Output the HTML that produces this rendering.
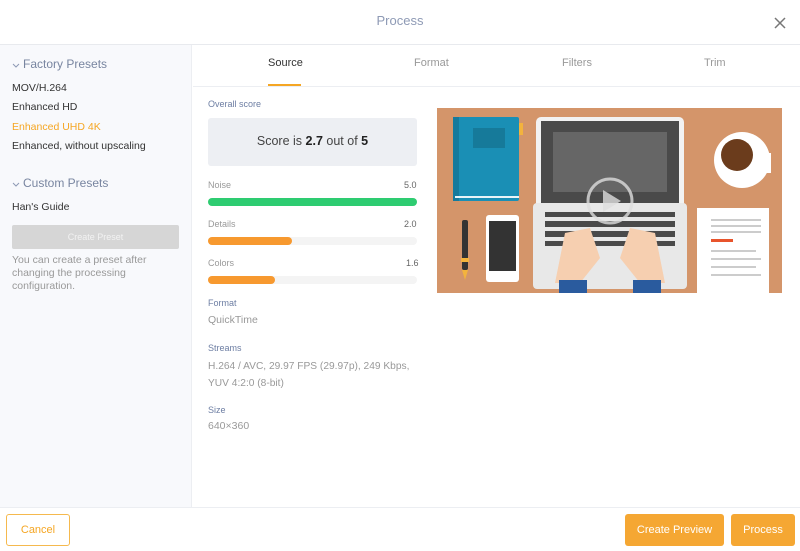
<!DOCTYPE html>
<html><head><meta charset="utf-8"><style>
*{margin:0;padding:0;box-sizing:border-box}
body{width:800px;height:551px;background:#fff;font-family:"Liberation Sans",sans-serif;position:relative;overflow:hidden;color:#333}
.a{position:absolute;white-space:nowrap}
</style></head><body>
<div class="a" style="left:0;top:13px;width:800px;text-align:center;font-size:13px;color:#8e9ab5">Process</div>
<svg class="a" style="left:774px;top:17px" width="12" height="12"><path d="M1 1L11 11M11 1L1 11" stroke="#777" stroke-width="1.5"/></svg>
<div class="a" style="left:0;top:44px;width:800px;height:1px;background:#e8eaee"></div>
<div class="a" style="left:0;top:45px;width:192px;height:462px;background:#f8f9fc;border-right:1px solid #eceef2"></div>
<svg class="a" style="left:12px;top:63px" width="8" height="6"><path d="M1 1L4 4L7 1" stroke="#8e9ab5" fill="none"/></svg>
<div class="a" style="left:23px;top:57px;font-size:12px;color:#7885a0">Factory Presets</div>
<div class="a" style="left:12px;top:82px;font-size:10.5px">MOV/H.264</div>
<div class="a" style="left:12px;top:101px;font-size:10.5px">Enhanced HD</div>
<div class="a" style="left:12px;top:121px;font-size:10.5px;color:#f5a623">Enhanced UHD 4K</div>
<div class="a" style="left:12px;top:140px;font-size:10.5px">Enhanced, without upscaling</div>
<svg class="a" style="left:12px;top:182px" width="8" height="6"><path d="M1 1L4 4L7 1" stroke="#8e9ab5" fill="none"/></svg>
<div class="a" style="left:23px;top:176px;font-size:12px;color:#7885a0">Custom Presets</div>
<div class="a" style="left:12px;top:201px;font-size:10.5px">Han's Guide</div>
<div class="a" style="left:12px;top:225px;width:167px;height:24px;background:#d6d6d6;border-radius:2px;color:#f2f2f2;font-size:9px;text-align:center;line-height:24px">Create Preset</div>
<div class="a" style="left:12px;top:254px;font-size:10.5px;color:#999;line-height:13px;white-space:normal;width:170px">You can create a preset after changing the processing configuration.</div>
<div class="a" style="left:193px;top:86px;width:607px;height:1px;background:#eceef2"></div>
<div class="a" style="left:268px;top:57px;font-size:11px;color:#333">Source</div>
<div class="a" style="left:268px;top:84px;width:33px;height:2px;background:#f5a623"></div>
<div class="a" style="left:414px;top:57px;font-size:11px;color:#999">Format</div>
<div class="a" style="left:562px;top:57px;font-size:11px;color:#999">Filters</div>
<div class="a" style="left:704px;top:57px;font-size:11px;color:#999">Trim</div>
<div class="a" style="left:208px;top:99px;font-size:9px;color:#6d7ea3">Overall score</div>
<div class="a" style="left:208px;top:118px;width:209px;height:48px;background:#edeff3;border-radius:3px;text-align:center;line-height:47px;font-size:12.5px;color:#444">Score is <b style="color:#222">2.7</b> out of <b style="color:#222">5</b></div>
<div class="a" style="left:208px;top:180px;font-size:9px;color:#999">Noise</div><div class="a" style="left:404px;top:180px;font-size:9px;color:#666">5.0</div>
<div class="a" style="left:208px;top:198px;width:209px;height:8px;border-radius:4px;background:#2ecc71"></div>
<div class="a" style="left:208px;top:219px;font-size:9px;color:#999">Details</div><div class="a" style="left:404px;top:219px;font-size:9px;color:#666">2.0</div>
<div class="a" style="left:208px;top:237px;width:209px;height:8px;border-radius:4px;background:#f4f4f4"></div>
<div class="a" style="left:208px;top:237px;width:84px;height:8px;border-radius:4px;background:#f7992f"></div>
<div class="a" style="left:208px;top:258px;font-size:9px;color:#999">Colors</div><div class="a" style="left:406px;top:258px;font-size:9px;color:#666">1.6</div>
<div class="a" style="left:208px;top:276px;width:209px;height:8px;border-radius:4px;background:#f4f4f4"></div>
<div class="a" style="left:208px;top:276px;width:67px;height:8px;border-radius:4px;background:#f7992f"></div>
<div class="a" style="left:208px;top:298px;font-size:9px;color:#6d7ea3">Format</div>
<div class="a" style="left:208px;top:314px;font-size:10.5px;color:#999">QuickTime</div>
<div class="a" style="left:208px;top:343px;font-size:9px;color:#6d7ea3">Streams</div>
<div class="a" style="left:208px;top:358px;font-size:10.2px;color:#999;line-height:17px">H.264 / AVC, 29.97 FPS (29.97p), 249 Kbps,<br>YUV 4:2:0 (8-bit)</div>
<div class="a" style="left:208px;top:405px;font-size:9px;color:#6d7ea3">Size</div>
<div class="a" style="left:208px;top:420px;font-size:10.5px;color:#999">640×360</div>
<svg class="a" style="left:437px;top:108px" width="345" height="185" viewBox="0 0 345 185">
<rect width="345" height="185" fill="#d4956a"/>
<rect x="16" y="9" width="66" height="84" rx="2" fill="#1a8fb5"/><rect x="16" y="9" width="6" height="84" fill="#157a9c"/>
<rect x="36" y="20" width="32" height="20" fill="#167a9a"/><rect x="82" y="15" width="4" height="12" fill="#f3b33d"/>
<rect x="18" y="88" width="64" height="2" fill="#e8f4f8"/>
<rect x="99" y="9" width="148" height="100" rx="5" fill="#f2f2f2"/><rect x="104" y="13" width="138" height="88" fill="#4a4a4a"/><rect x="116" y="24" width="114" height="60" fill="#666"/>
<rect x="96" y="95" width="154" height="86" rx="4" fill="#e8e8e8"/>
<g fill="#4a4a4a"><rect x="108" y="104" width="130" height="5"/><rect x="108" y="113" width="130" height="6"/><rect x="108" y="123" width="130" height="6"/><rect x="108" y="133" width="130" height="5"/></g>
<circle cx="173" cy="93" r="22" fill="none" stroke="#ddd" stroke-width="3" opacity=".8"/><path d="M166 82L184 93L166 104Z" fill="#ddd" opacity=".8"/>
<path d="M128 125l25 -5 10 30 -20 25h-25z" fill="#f6cfb0"/><path d="M218 125l-25 -5 -10 30 20 25h25z" fill="#f6cfb0"/>
<rect x="122" y="172" width="28" height="13" fill="#2a5b9e"/><rect x="196" y="172" width="28" height="13" fill="#2a5b9e"/>
<circle cx="305" cy="52" r="28" fill="#fff"/><circle cx="300" cy="47" r="16" fill="#6b3c1c"/><rect x="322" y="47" width="10" height="16" fill="none" stroke="#fff" stroke-width="4"/>
<rect x="260" y="100" width="72" height="85" fill="#fff"/>
<g fill="#ccc"><rect x="274" y="111" width="50" height="2"/><rect x="274" y="117" width="50" height="2"/><rect x="274" y="123" width="50" height="2"/><rect x="274" y="142" width="45" height="2"/><rect x="274" y="150" width="50" height="2"/><rect x="274" y="158" width="45" height="2"/><rect x="274" y="166" width="50" height="2"/></g>
<rect x="274" y="131" width="22" height="3" fill="#e8542c"/>
<rect x="49" y="107" width="33" height="67" rx="3" fill="#fff"/><rect x="52" y="113" width="27" height="50" fill="#333"/>
<rect x="25" y="112" width="6" height="50" rx="2" fill="#333"/><rect x="24" y="150" width="8" height="4" fill="#f3b33d"/><path d="M25 162h6l-3 10z" fill="#f3b33d"/>
</svg>
<div class="a" style="left:0;top:507px;width:800px;height:1px;background:#eceef2"></div>
<div class="a" style="left:6px;top:514px;width:64px;height:32px;border:1px solid #f5b94e;border-radius:3px;text-align:center;line-height:30px;font-size:11px;color:#f5a623">Cancel</div>
<div class="a" style="left:625px;top:514px;width:99px;height:32px;background:#f5a733;border-radius:3px;text-align:center;line-height:32px;font-size:11px;color:#fff">Create Preview</div>
<div class="a" style="left:731px;top:514px;width:64px;height:32px;background:#f5a733;border-radius:3px;text-align:center;line-height:32px;font-size:11px;color:#fff">Process</div>
</body></html>
